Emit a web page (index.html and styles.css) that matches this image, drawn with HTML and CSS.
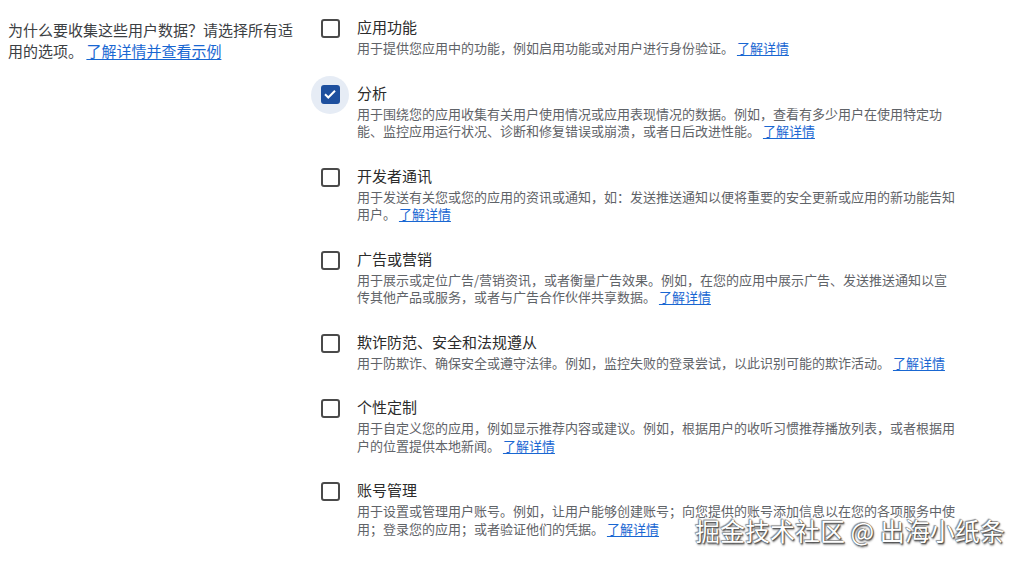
FILE: index.html
```html
<!DOCTYPE html>
<html lang="zh-CN">
<head>
<meta charset="utf-8">
<title>数据收集用途</title>
<link rel="stylesheet" href="styles.css">
</head>
<body>
<div class="page">
  <div class="intro">为什么要收集这些用户数据？请选择所有适用的选项。 <a href="#" class="link">了解详情并查看示例</a></div>
  <ul class="options">
    <li class="option">
      <span class="cb-wrap"><span class="cb"></span></span>
      <div class="body">
        <div class="title">应用功能</div>
        <p class="desc">用于提供您应用中的功能，例如启用功能或对用户进行身份验证。 <a href="#" class="link">了解详情</a></p>
      </div>
    </li>
    <li class="option">
      <span class="cb-wrap checked"><span class="cb"><svg viewBox="0 0 18 18" width="18" height="18"><path d="M4 9.2l3.3 3.3L14 5.8" fill="none" stroke="#fff" stroke-width="2"/></svg></span></span>
      <div class="body">
        <div class="title">分析</div>
        <p class="desc">用于围绕您的应用收集有关用户使用情况或应用表现情况的数据。例如，查看有多少用户在使用特定功能、监控应用运行状况、诊断和修复错误或崩溃，或者日后改进性能。 <a href="#" class="link">了解详情</a></p>
      </div>
    </li>
    <li class="option">
      <span class="cb-wrap"><span class="cb"></span></span>
      <div class="body">
        <div class="title">开发者通讯</div>
        <p class="desc">用于发送有关您或您的应用的资讯或通知，如：发送推送通知以便将重要的安全更新或应用的新功能告知用户。 <a href="#" class="link">了解详情</a></p>
      </div>
    </li>
    <li class="option">
      <span class="cb-wrap"><span class="cb"></span></span>
      <div class="body">
        <div class="title">广告或营销</div>
        <p class="desc">用于展示或定位广告/营销资讯，或者衡量广告效果。例如，在您的应用中展示广告、发送推送通知以宣传其他产品或服务，或者与广告合作伙伴共享数据。 <a href="#" class="link">了解详情</a></p>
      </div>
    </li>
    <li class="option">
      <span class="cb-wrap"><span class="cb"></span></span>
      <div class="body">
        <div class="title">欺诈防范、安全和法规遵从</div>
        <p class="desc">用于防欺诈、确保安全或遵守法律。例如，监控失败的登录尝试，以此识别可能的欺诈活动。 <a href="#" class="link">了解详情</a></p>
      </div>
    </li>
    <li class="option">
      <span class="cb-wrap"><span class="cb"></span></span>
      <div class="body">
        <div class="title">个性定制</div>
        <p class="desc">用于自定义您的应用，例如显示推荐内容或建议。例如，根据用户的收听习惯推荐播放列表，或者根据用户的位置提供本地新闻。 <a href="#" class="link">了解详情</a></p>
      </div>
    </li>
    <li class="option">
      <span class="cb-wrap"><span class="cb"></span></span>
      <div class="body">
        <div class="title">账号管理</div>
        <p class="desc">用于设置或管理用户账号。例如，让用户能够创建账号；向您提供的账号添加信息以在您的各项服务中使用；登录您的应用；或者验证他们的凭据。 <a href="#" class="link">了解详情</a></p>
      </div>
    </li>
  </ul>
  <div class="watermark">掘金技术社区 @ 出海小纸条</div>
</div>
</body>
</html>
```

FILE: styles.css
```css
* { box-sizing: border-box; }
html, body {
  margin: 0;
  padding: 0;
  background: #fff;
}
body {
  font-family: "Noto Sans CJK SC", "Noto Sans", sans-serif;
  color: #202124;
}
.page {
  position: relative;
  width: 1022px;
  height: 561px;
  display: flex;
  padding: 16px 0 0 8px;
  overflow: hidden;
}
.intro {
  width: 296px;
  flex: none;
  font-size: 15px;
  line-height: 21px;
  padding-top: 3px;
  color: #3c4043;
}
.link {
  color: #1967d2;
  text-decoration: underline;
  text-underline-offset: 2px;
}
.options {
  list-style: none;
  margin: 0 0 0 6px;
  padding: 0;
  width: 660px;
}
.option {
  display: flex;
  padding-bottom: 25px;
}
.cb-wrap {
  position: relative;
  flex: none;
  width: 40px;
  height: 22px;
  margin-right: 7px;
  display: flex;
  align-items: center;
  justify-content: center;
  padding-top: 3px;
}
.cb {
  position: relative;
  z-index: 1;
  width: 19px;
  height: 19px;
  border: 2px solid #4a4a4a;
  border-radius: 3px;
  display: flex;
  align-items: center;
  justify-content: center;
}
.cb-wrap.checked::before {
  content: "";
  position: absolute;
  left: 1px;
  top: -6px;
  width: 38px;
  height: 38px;
  border-radius: 50%;
  background: #e6ecf5;
}
.cb-wrap.checked .cb {
  background: #1d4f9e;
  border-color: #1d4f9e;
}
.cb svg {
  display: block;
  flex: none;
}
.body {
  width: 602px;
}
.title {
  font-size: 15px;
  line-height: 22px;
  color: #2b2b2b;
}
.desc {
  margin: 1px 0 0;
  font-size: 13px;
  line-height: 17.5px;
  color: #5f6368;
}
.watermark {
  position: absolute;
  left: 695px;
  top: 514px;
  font-size: 25px;
  line-height: 32px;
  color: #fff;
  white-space: nowrap;
  text-shadow: 0 0 1px #333, 1px 1px 1px #555, -1px -1px 1px #999, 1px 2px 2px #888;
}
```
